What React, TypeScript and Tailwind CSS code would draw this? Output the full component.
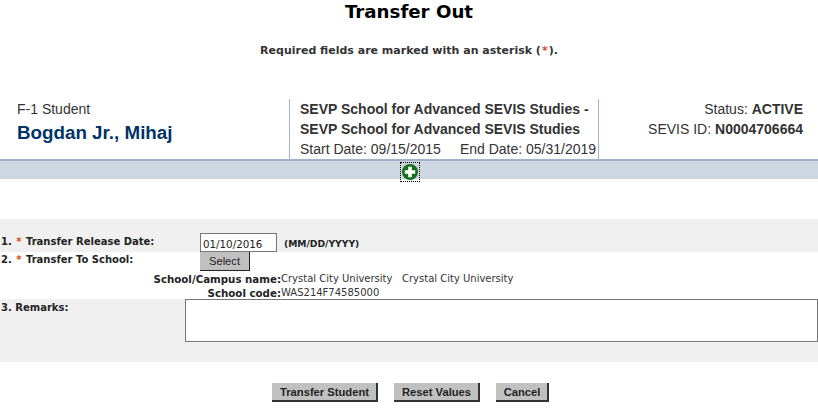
const verdana = "font-['DejaVu_Sans',Verdana,sans-serif]";
const arial = "font-['Liberation_Sans',Arial,sans-serif]";
const actionBtn =
  "h-[19px] bg-[#c0c0c0] pt-[1px] pl-[1px] border-r-2 border-b-2 border-r-[#333] border-b-[#333] font-['Liberation_Sans',Arial,sans-serif] text-[11.2px] font-bold text-[#222]";
const label = "text-[10px] font-bold text-[#222] leading-[14px]";

function Star() {
  return <span className="mx-[1px] text-[#d9481c]">*</span>;
}

export default function App() {
  return (
    <div className={`${verdana} w-[818px] h-[413px] overflow-hidden bg-white`}>
      <h1 className="pt-[1px] h-[29px] text-center text-[18.2px] leading-[22px] font-bold text-black">Transfer Out</h1>
      <p className="mt-[15px] h-[55px] text-center text-[11px] leading-[14px] font-bold text-[#333]">
        Required fields are marked with an asterisk (<Star />).
      </p>

      {/* student header */}
      <div className={`${arial} flex h-[60px] text-[#333]`}>
        <div className="w-[289px] pl-[17px] pt-[2px]">
          <div className="text-[14px] leading-[16px]">F-1 Student</div>
          <div className="mt-[5px] text-[18.8px] leading-[22px] font-bold text-[#003366]">Bogdan Jr., Mihaj</div>
        </div>
        <div className="w-[310px] border-x border-[#a3b3cc] pl-[10px] text-[14px] leading-[20px]">
          <div className="font-bold">SEVP School for Advanced SEVIS Studies -</div>
          <div className="font-bold">SEVP School for Advanced SEVIS Studies</div>
          <div className="flex gap-[19px] whitespace-nowrap pt-[1px] text-[14px] leading-[19px]">
            <span>Start Date: 09/15/2015</span>
            <span>End Date: 05/31/2019</span>
          </div>
        </div>
        <div className="flex-1 pr-[15px] text-right text-[14px] leading-[20px]">
          <div>Status: <b>ACTIVE</b></div>
          <div>SEVIS ID: <b>N0004706664</b></div>
        </div>
      </div>

      <div className="flex h-[20px] justify-center border-t-2 border-[#a3b3cc] bg-[#cdd6e1] pl-[2px]">
        <span className="mt-[1px] h-[20px] w-[20px] border border-dotted border-black p-[1px]">
          <svg viewBox="0 0 16 16" className="h-[16px] w-[16px]">
            <circle cx="8" cy="8" r="8" fill="#16701f" />
            <path d="M6.2 2.8h3.6v3.4h3.4v3.6H9.8v3.4H6.2V9.8H2.8V6.2h3.4z" fill="#fff" />
          </svg>
        </span>
      </div>

      {/* form */}
      <div className="mt-[40px]">
        <div className="flex h-[33px] items-start bg-[#f0f0f0] pt-[14px]">
          <div className={`${label} w-[200px] pl-[1px] pt-[2px]`}>1. <Star /> Transfer Release Date:</div>
          <input
            readOnly
            value="01/10/2016"
            className={`${verdana} h-[19px] w-[77px] border border-[#767676] bg-white pl-[2px] pt-[2px] text-[10.3px] text-[#222]`}
          />
          <span className="ml-[7px] pt-[4px] text-[9.2px] font-bold leading-[14px] text-[#222]">(MM/DD/YYYY)</span>
        </div>
        <div className="h-[47px] bg-white">
          <div className="flex h-[20px] items-start">
            <div className={`${label} w-[200px] pl-[1px] pt-[1px]`}>2. <Star /> Transfer To School:</div>
            <button className={`${arial} h-[19px] w-[50px] border-r border-b border-r-[#222] border-b-[#222] bg-[#c0c0c0] text-[11.2px] text-[#222]`}>Select</button>
          </div>
          <div className="grid grid-cols-[281px_1fr] text-[10px] leading-[14px] text-[#333]">
            <b className="text-right text-[10.25px] text-[#222]">School/Campus name:</b>
            <span>Crystal City University&nbsp;&nbsp;&nbsp;Crystal City University</span>
            <b className="text-right text-[10.25px] text-[#222]">School code:</b>
            <span>WAS214F74585000</span>
          </div>
        </div>
        <div className="flex h-[63px] items-start bg-[#f0f0f0]">
          <div className={`${label} w-[185px] pl-[1px] pt-[2px]`}>3. Remarks:</div>
          <textarea readOnly className="h-[43px] w-[633px] resize-none border border-[#767676] bg-white" />
        </div>
      </div>

      <div className="mt-[21px] flex justify-center gap-[16px] pl-[3px]">
        <button className={`${actionBtn} w-[106px]`}>Transfer Student</button>
        <button className={`${actionBtn} w-[86px]`}>Reset Values</button>
        <button className={`${actionBtn} w-[53px]`}>Cancel</button>
      </div>
    </div>
  );
}
